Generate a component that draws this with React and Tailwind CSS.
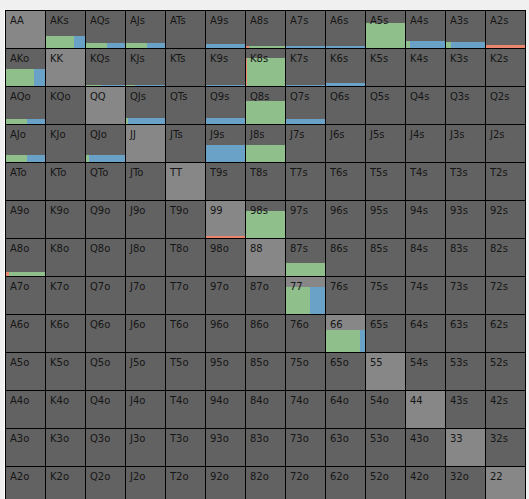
import React from "react";

const RANKS = ["A", "K", "Q", "J", "T", "9", "8", "7", "6", "5", "4", "3", "2"];

const G = "#8fbf8b";
const B = "#6aa1c6";
const R = "#e9866d";

// bar: h = height in px, segs = [colour, width] from left, last one fills the rest
const BARS = {
  AKs: { h: 12, segs: [[G, 28], [B]] },
  AQs: { h: 5, segs: [[G, 21], [B]] },
  AJs: { h: 5, segs: [[G, 21], [B]] },
  A9s: { h: 4, segs: [[B]] },
  A8s: { h: 2, segs: [[R, 3], [G]] },
  A7s: { h: 2, segs: [[B]] },
  A6s: { h: 2, segs: [[B]] },
  A5s: { h: 25, segs: [[G]] },
  A4s: { h: 7, segs: [[G, 4], [B]] },
  A3s: { h: 6, segs: [[G, 5], [B]] },
  A2s: { h: 3, segs: [[R]] },
  AKo: { h: 17, segs: [[G, 28], [B]] },
  KQs: { h: 1, segs: [[G, 15], [B]] },
  KJs: { h: 1, segs: [[G, 9], [B]] },
  K9s: { h: 1, segs: [[B]] },
  K8s: { h: 28, segs: [[R, 1], [G]] },
  K7s: { h: 1, segs: [[B]] },
  K6s: { h: 3, segs: [[B]] },
  AQo: { h: 5, segs: [[G, 21], [B]] },
  QJs: { h: 6, segs: [[G, 2], [B]] },
  Q9s: { h: 6, segs: [[B]] },
  Q8s: { h: 23, segs: [[G]] },
  Q7s: { h: 5, segs: [[B]] },
  AJo: { h: 7, segs: [[G, 21], [B]] },
  QJo: { h: 7, segs: [[G, 3], [B]] },
  J9s: { h: 17, segs: [[B]] },
  J8s: { h: 17, segs: [[G]] },
  "99": { h: 2, segs: [[R]] },
  "98s": { h: 27, segs: [[G]] },
  A8o: { h: 4, segs: [[R, 3], [G]] },
  "87s": { h: 13, segs: [[G]] },
  "77": { h: 27, segs: [[G, 24], [B]] },
  "66": { h: 22, segs: [[G, 34], [B]] },
};

const handName = (r, c) => {
  if (r === c) return RANKS[r] + RANKS[c];
  if (c > r) return RANKS[r] + RANKS[c] + "s";
  return RANKS[c] + RANKS[r] + "o";
};

const Cell = ({ r, c }) => {
  const name = handName(r, c);
  const bar = BARS[name];
  return (
    <div
      className={`grid ${r === c ? "bg-[#878787]" : "bg-[#626262]"}`}
    >
      {bar && (
        <div
          className="[grid-area:1/1] self-end flex"
          style={{ height: bar.h }}
        >
          {bar.segs.map(([color, w], i) => (
            <div
              key={i}
              className={w ? "shrink-0" : "flex-1"}
              style={{ background: color, width: w }}
            />
          ))}
        </div>
      )}
      <span className="[grid-area:1/1] relative self-start pl-[4px] pt-[4px] text-[10px] leading-[12px] text-[#161616]">
        {name}
      </span>
    </div>
  );
};

export default function App() {
  return (
    <div
      className="h-[499px] overflow-hidden bg-[#f0f0f0] pt-[7px] pl-[4px]"
      style={{ fontFamily: '"DejaVu Sans", Verdana, sans-serif' }}
    >
      <div className="border-l border-white inline-block">
        <div className="grid grid-cols-[repeat(13,39px)] auto-rows-[37px] gap-px p-px bg-black">
          {RANKS.map((_, r) =>
            RANKS.map((_, c) => <Cell key={`${r}-${c}`} r={r} c={c} />)
          )}
        </div>
      </div>
    </div>
  );
}
